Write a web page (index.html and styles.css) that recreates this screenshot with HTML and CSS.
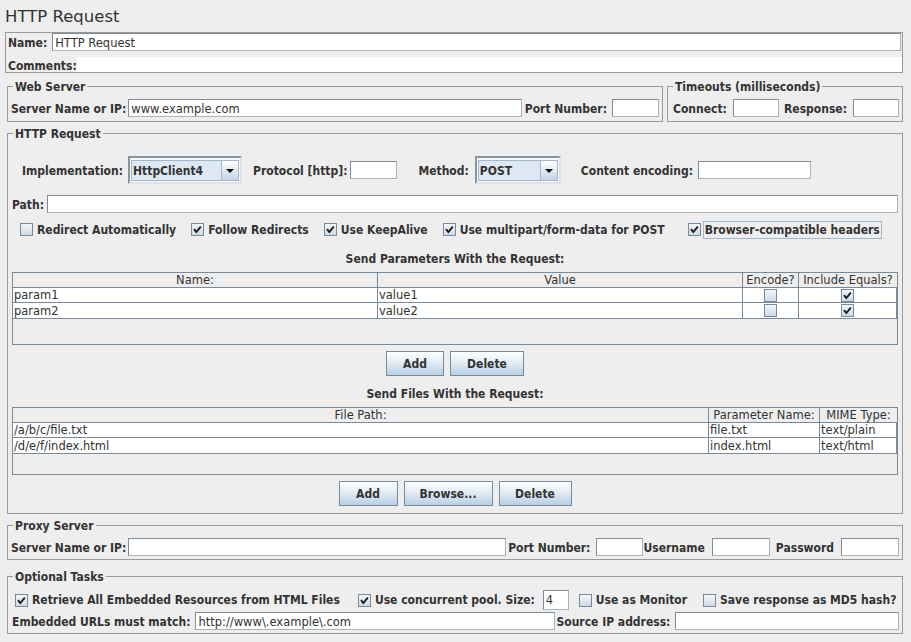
FILE: index.html
```html
<!DOCTYPE html>
<html lang="en">
<head>
<meta charset="utf-8">
<title>HTTP Request</title>
<link rel="stylesheet" href="styles.css">
</head>
<body>
<div class="title">HTTP Request</div>

<div class="namebox">
  <div class="nrow"><span class="lbl">Name:</span><div class="tf grow ml5">HTTP Request</div></div>
  <div class="crow"><span class="lbl">Comments:</span><div class="comment"></div></div>
</div>

<div class="toprow">
  <fieldset class="fs web">
    <legend>Web Server</legend>
    <div class="frow">
      <span class="lbl">Server Name or IP:</span>
      <div class="tf grow ml2">www.example.com</div>
      <span class="lbl ml3">Port Number:</span>
      <div class="tf ml5 w47"></div>
    </div>
  </fieldset>
  <fieldset class="fs timeouts">
    <legend>Timeouts (milliseconds)</legend>
    <div class="frow">
      <span class="lbl ml2">Connect:</span>
      <div class="tf ml6 w46"></div>
      <span class="lbl push">Response:</span>
      <div class="tf ml6 w46"></div>
    </div>
  </fieldset>
</div>

<fieldset class="fs http">
  <legend>HTTP Request</legend>
  <div class="implrow">
    <span class="lbl">Implementation:</span>
    <div class="combo w114 ml5"><div class="combo-field">HttpClient4</div><div class="combo-btn"><span class="arrow"></span></div></div>
    <span class="lbl ml11">Protocol [http]:</span>
    <div class="tf w47 ml3"></div>
    <span class="lbl ml21">Method:</span>
    <div class="combo w86 ml6"><div class="combo-field">POST</div><div class="combo-btn"><span class="arrow"></span></div></div>
    <span class="lbl ml20">Content encoding:</span>
    <div class="tf w113 ml5"></div>
  </div>
  <div class="pathrow"><span class="lbl">Path:</span><div class="tf grow ml3"></div></div>
  <div class="cbrow">
    <div class="cbitem"><span class="cb"></span><span class="cbt">Redirect Automatically</span></div>
    <div class="cbitem ml13"><span class="cb"><svg class="ck" viewBox="0 0 11 11" width="11" height="11"><path d="M2 5.2 L4.3 8 L8.8 2.6" fill="none" stroke="#1a1a1a" stroke-width="1.9"/></svg></span><span class="cbt">Follow Redirects</span></div>
    <div class="cbitem ml13"><span class="cb"><svg class="ck" viewBox="0 0 11 11" width="11" height="11"><path d="M2 5.2 L4.3 8 L8.8 2.6" fill="none" stroke="#1a1a1a" stroke-width="1.9"/></svg></span><span class="cbt">Use KeepAlive</span></div>
    <div class="cbitem ml13"><span class="cb"><svg class="ck" viewBox="0 0 11 11" width="11" height="11"><path d="M2 5.2 L4.3 8 L8.8 2.6" fill="none" stroke="#1a1a1a" stroke-width="1.9"/></svg></span><span class="cbt">Use multipart/form-data for POST</span></div>
    <div class="cbitem ml21 focus"><span class="cb"><svg class="ck" viewBox="0 0 11 11" width="11" height="11"><path d="M2 5.2 L4.3 8 L8.8 2.6" fill="none" stroke="#1a1a1a" stroke-width="1.9"/></svg></span><span class="cbt">Browser-compatible headers</span></div>
  </div>

  <div class="sect">Send Parameters With the Request:</div>
  <div class="tbl params">
    <div class="tr th"><div>Name:</div><div>Value</div><div>Encode?</div><div>Include Equals?</div></div>
    <div class="tr td r1"><div>param1</div><div>value1</div><div class="c"><span class="cb"></span></div><div class="c"><span class="cb"><svg class="ck" viewBox="0 0 11 11" width="11" height="11"><path d="M2 5.2 L4.3 8 L8.8 2.6" fill="none" stroke="#1a1a1a" stroke-width="1.9"/></svg></span></div></div>
    <div class="tr td r2"><div>param2</div><div>value2</div><div class="c"><span class="cb"></span></div><div class="c"><span class="cb"><svg class="ck" viewBox="0 0 11 11" width="11" height="11"><path d="M2 5.2 L4.3 8 L8.8 2.6" fill="none" stroke="#1a1a1a" stroke-width="1.9"/></svg></span></div></div>
  </div>
  <div class="btnrow"><button class="btn w58">Add</button><button class="btn w74">Delete</button></div>

  <div class="sect s2">Send Files With the Request:</div>
  <div class="tbl files">
    <div class="tr th"><div>File Path:</div><div>Parameter Name:</div><div>MIME Type:</div></div>
    <div class="tr td r1"><div>/a/b/c/file.txt</div><div>file.txt</div><div>text/plain</div></div>
    <div class="tr td r2"><div>/d/e/f/index.html</div><div>index.html</div><div>text/html</div></div>
  </div>
  <div class="btnrow"><button class="btn w59">Add</button><button class="btn w89">Browse...</button><button class="btn w73">Delete</button></div>
</fieldset>

<fieldset class="fs proxy">
  <legend>Proxy Server</legend>
  <div class="frow">
    <span class="lbl">Server Name or IP:</span>
    <div class="tf grow ml2"></div>
    <span class="lbl ml2">Port Number:</span>
    <div class="tf ml6 w47"></div>
    <span class="lbl">Username</span>
    <div class="tf ml7 w58"></div>
    <span class="lbl ml6">Password</span>
    <div class="tf ml7 w58"></div>
  </div>
</fieldset>

<fieldset class="fs optional">
  <legend>Optional Tasks</legend>
  <div class="orow1">
    <div class="cbitem"><span class="cb"><svg class="ck" viewBox="0 0 11 11" width="11" height="11"><path d="M2 5.2 L4.3 8 L8.8 2.6" fill="none" stroke="#1a1a1a" stroke-width="1.9"/></svg></span><span class="cbt">Retrieve All Embedded Resources from HTML Files</span></div>
    <div class="cbitem ml16"><span class="cb"><svg class="ck" viewBox="0 0 11 11" width="11" height="11"><path d="M2 5.2 L4.3 8 L8.8 2.6" fill="none" stroke="#1a1a1a" stroke-width="1.9"/></svg></span><span class="cbt">Use concurrent pool. Size:</span></div>
    <div class="tf pool ml6">4</div>
    <div class="cbitem ml10"><span class="cb"></span><span class="cbt">Use as Monitor</span></div>
    <div class="cbitem ml14"><span class="cb"></span><span class="cbt">Save response as MD5 hash?</span></div>
  </div>
  <div class="orow2">
    <span class="lbl">Embedded URLs must match:</span>
    <div class="tf w360 ml5">http://www\.example\.com</div>
    <span class="lbl ml1">Source IP address:</span>
    <div class="tf grow ml5"></div>
  </div>
</fieldset>
</body>
</html>
```

FILE: styles.css
```css
* { box-sizing: border-box; }
html, body { margin: 0; padding: 0; }
body {
  background: #eeeeee;
  width: 911px;
  height: 642px;
  overflow: hidden;
  font-family: "DejaVu Sans", sans-serif;
  font-size: 11.5px;
  color: #333333;
}

.lbl, .fs legend, .cbt, .sect, .btn, .combo-field {
  font-family: "DejaVu Sans Condensed", "DejaVu Sans", sans-serif;
  font-stretch: condensed;
  font-weight: bold;
  font-size: 12px;
  white-space: nowrap;
  color: #333333;
}
.lbl { padding-top: 2px; }

.title {
  height: 32px;
  line-height: 31px;
  padding: 1px 0 0 5px;
  font-size: 16.5px;
}

/* name box */
.namebox {
  margin: 0 8px 0 5px;
  border: 1px solid #9a9a9a;
  height: 41px;
}
.nrow { display: flex; align-items: center; height: 18px; padding: 0 1px 0 2px; }
.crow { display: flex; align-items: center; height: 15px; margin-top: 6px; padding-left: 2px; }
.comment { flex: 1; align-self: stretch; background: #ffffff; }

/* text fields */
.tf {
  height: 18px;
  line-height: 16px;
  background: #ffffff;
  border: 1px solid;
  border-color: #7f8d9b #aab4be #aab4be #7f8d9b;
  padding: 1px 0 0 2px;
  white-space: nowrap;
  overflow: hidden;
  flex: none;
}
.grow { flex: 1; min-width: 0; }

/* fieldsets */
.fs {
  margin: 0;
  border: 1px solid #9a9a9a;
  padding: 0 3px 3px 3px;
  min-width: 0;
}
.fs legend {
  padding: 2px 2px 0 2px;
  margin-left: 2px;
  line-height: 14px;
}

.toprow {
  display: flex;
  gap: 4px;
  margin: 5px 8px 0 7px;
}
.web { flex: 1; }
.timeouts { width: 236px; flex: none; }
.frow { display: flex; align-items: center; height: 20px; margin-top: 4px; }
.push { margin-left: auto; }

.http { margin: 3px 8px 0 7px; padding-bottom: 7px; }
.implrow { display: flex; align-items: center; height: 28px; margin-top: 15px; padding-left: 11px; }
.pathrow { display: flex; align-items: center; height: 18px; margin-top: 11px; padding: 0 1px 0 1px; }
.cbrow { display: flex; align-items: center; height: 17px; margin-top: 8px; padding-left: 9px; }

/* combo */
.combo {
  display: flex;
  height: 28px;
  border: 2px solid;
  border-color: #8c949c #dfe3e7 #dfe3e7 #8c949c;
  padding: 2px 1px 1px 1px;
  background: #f6f8fa;
  flex: none;
}
.combo-field {
  flex: 1;
  display: flex;
  align-items: center;
  padding: 1px 0 0 1px;
  background: #dde8f3;
  border: 1px solid #a3b8cc;
  border-right: none;
}
.combo-btn {
  width: 18px;
  display: flex;
  align-items: center;
  justify-content: center;
  border: 1px solid #a3b8cc;
  background: linear-gradient(#ffffff, #c3d4e5);
}
.arrow {
  width: 0;
  height: 0;
  border-left: 4px solid transparent;
  border-right: 4px solid transparent;
  border-top: 4px solid #111111;
}

/* checkboxes */
.cbitem { display: flex; align-items: center; flex: none; }
.cb {
  width: 13px;
  height: 13px;
  flex: none;
  display: inline-flex;
  border: 1px solid #7a8a99;
  background: linear-gradient(#f3f6f9, #cfdae6);
}
.ck { display: block; }
.cbt {
  margin-left: 2px;
  border: 1px solid transparent;
  padding: 1px 1px 0 1px;
  line-height: 15px;
}
.focus .cbt { border-color: #a3b8cc; }

/* section headings */
.sect { text-align: center; line-height: 14px; padding-top: 2px; margin-top: 12px; }
.s2 { margin-top: 9px; }

/* tables */
.tbl {
  margin: 6px 1px 0 1px;
  border: 1px solid #7a8a99;
  background: #eeeeee;
}
.params { height: 73px; }
.files { height: 68px; }
.tr { display: grid; }
.params .tr { grid-template-columns: 365px 365px 56px 98px; }
.files .tr { grid-template-columns: 696px 111px 77px; }
.tr > div {
  border-right: 1px solid #7a8a99;
  border-bottom: 1px solid #7a8a99;
  white-space: nowrap;
  overflow: hidden;
  display: flex;
  align-items: center;
}
.tr > div:last-child { border-right: none; }
.th > div { justify-content: center; height: 15px; }
.td > div { background: #ffffff; padding-left: 1px; }
.r1 > div { height: 15px; }
.r2 > div { height: 16px; }
.td > .c { justify-content: center; padding-left: 0; }
.td > div:last-child { border-right: 1px solid #7a8a99; }

/* buttons */
.btnrow { display: flex; justify-content: center; gap: 6px; margin-top: 6px; }
.btn {
  height: 25px;
  border: 1px solid #7a8a99;
  background: linear-gradient(#ffffff, #e4ecf4 45%, #b8cfe5);
  padding: 1px 0 0 0;
  margin: 0;
}

/* proxy / optional */
.proxy { margin: 3px 8px 0 7px; padding-bottom: 2px; }
.optional { margin: 8px 8px 0 7px; padding-bottom: 2px; }
.orow1 { display: flex; align-items: center; height: 20px; margin-top: 6px; padding-left: 4px; }
.orow2 { display: flex; align-items: center; height: 20px; margin-top: 1px; padding-left: 1px; }
.pool { width: 26px; height: 20px; line-height: 17px; }

/* sizes */
.w46 { width: 46px; }
.w47 { width: 47px; }
.w58 { width: 58px; }
.w59 { width: 59px; }
.w73 { width: 73px; }
.w74 { width: 74px; }
.w86 { width: 86px; }
.w89 { width: 89px; }
.w113 { width: 113px; }
.w114 { width: 114px; }
.w360 { width: 360px; }
.ml1 { margin-left: 1px; }
.ml2 { margin-left: 2px; }
.ml3 { margin-left: 3px; }
.ml5 { margin-left: 5px; }
.ml6 { margin-left: 6px; }
.ml7 { margin-left: 7px; }
.ml9 { margin-left: 9px; }
.ml10 { margin-left: 10px; }
.ml11 { margin-left: 11px; }
.ml13 { margin-left: 13px; }
.ml14 { margin-left: 14px; }
.ml16 { margin-left: 16px; }
.ml20 { margin-left: 20px; }
.ml21 { margin-left: 21px; }
```
